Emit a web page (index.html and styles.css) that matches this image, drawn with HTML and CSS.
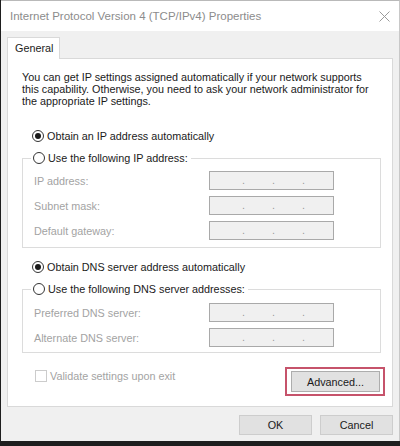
FILE: index.html
```html
<!DOCTYPE html>
<html lang="en">
<head>
    <meta charset="UTF-8">
    <meta name="viewport" content="width=device-width, initial-scale=1.0">
    <link rel="stylesheet" href="styles.css">
    <title>Internet Protocol Version 4 (TCP/IPv4) Properties</title>
</head>
<body>
    <div class="window">
        <div class="titlebar">
            <span class="title">Internet Protocol Version 4 (TCP/IPv4) Properties</span>
            <svg class="close" width="11" height="11" viewBox="0 0 11 11">
                <path d="M0.5 0.5 L10.5 10.5 M10.5 0.5 L0.5 10.5" stroke="#9a9a9a" stroke-width="1" fill="none"/>
            </svg>
        </div>

        <div class="dialog">
            <div class="tabs">
                <span class="tab">General</span>
            </div>

            <div class="panel">
                <p class="intro">You can get IP settings assigned automatically if your network supports this capability. Otherwise, you need to ask your network administrator for the appropriate IP settings.</p>

                <!-- IP address -->
                <div class="radio-row first">
                    <span class="radio checked"></span>
                    <span>Obtain an IP address automatically</span>
                </div>
                <fieldset class="group">
                    <legend class="radio-row">
                        <span class="radio"></span>
                        <span>Use the following IP address:</span>
                    </legend>
                    <div class="field-row">
                        <span class="label">IP address:</span>
                        <span class="ip-box"><i>.</i><i>.</i><i>.</i></span>
                    </div>
                    <div class="field-row">
                        <span class="label">Subnet mask:</span>
                        <span class="ip-box"><i>.</i><i>.</i><i>.</i></span>
                    </div>
                    <div class="field-row">
                        <span class="label">Default gateway:</span>
                        <span class="ip-box"><i>.</i><i>.</i><i>.</i></span>
                    </div>
                </fieldset>

                <!-- DNS -->
                <div class="radio-row second">
                    <span class="radio checked"></span>
                    <span>Obtain DNS server address automatically</span>
                </div>
                <fieldset class="group dns">
                    <legend class="radio-row">
                        <span class="radio"></span>
                        <span>Use the following DNS server addresses:</span>
                    </legend>
                    <div class="field-row">
                        <span class="label">Preferred DNS server:</span>
                        <span class="ip-box"><i>.</i><i>.</i><i>.</i></span>
                    </div>
                    <div class="field-row">
                        <span class="label">Alternate DNS server:</span>
                        <span class="ip-box"><i>.</i><i>.</i><i>.</i></span>
                    </div>
                </fieldset>

                <div class="bottom-row">
                    <div class="check-row">
                        <span class="checkbox"></span>
                        <span>Validate settings upon exit</span>
                    </div>
                    <span class="highlight">
                        <button class="btn advanced">Advanced...</button>
                    </span>
                </div>
            </div>

            <div class="footer">
                <button class="btn">OK</button>
                <button class="btn">Cancel</button>
            </div>
        </div>
    </div>
</body>
</html>
```

FILE: styles.css
```css
*, body{
    box-sizing: border-box;
    margin: 0;
}
body{
    width: 400px;
    height: 446px;
    background: #1e1e1e;
    font-family: 'Liberation Sans', Arial, sans-serif;
    font-size: 10.8px;
    color: #1a1a1a;
    overflow: hidden;
}

.window{
    margin-left: 1px;
    width: 399px;
    height: 441px;
    background: #f0f0f0;
    border-top: 1px solid #b9b9b9;
    border-right: 1px solid #c8c8c8;
    display: flex;
    flex-direction: column;
}

/* title bar */
.titlebar{
    height: 30px;
    background: #fff;
    display: flex;
    align-items: center;
    justify-content: space-between;
    padding: 0 9px;
}
.title{
    font-size: 11.5px;
    color: #8c8c8c;
}

/* body of the dialog */
.dialog{
    padding: 6px 6px 0 6px;
}
.tabs{
    display: flex;
    position: relative;
    z-index: 1;
}
.tab{
    height: 22px;
    margin-bottom: -1px;
    padding: 4px 6px 0 7px;
    background: #fff;
    border: 1px solid #d9d9d9;
    border-bottom: none;
    color: #222;
}
.panel{
    height: 349px;
    background: #fff;
    border: 1px solid #d9d9d9;
    padding: 12px 11px 0 14px;
}
.intro{
    line-height: 12px;
}

/* radios */
.radio-row{
    display: flex;
    align-items: center;
    gap: 3px;
    height: 16px;
    line-height: 16px;
}
.radio-row.first{
    margin: 21px 0 0 10px;
}
.radio-row.second{
    margin: 11px 0 0 10px;
}
.radio{
    width: 12px;
    height: 12px;
    border: 1px solid #333;
    border-radius: 50%;
    display: flex;
    align-items: center;
    justify-content: center;
}
.radio.checked::after{
    content: '';
    width: 6px;
    height: 6px;
    border-radius: 50%;
    background: #1a1a1a;
}

/* group boxes */
.group{
    margin-top: 6px;
    border: 1px solid #dcdcdc;
    padding: 5px 0 7px 7px;
    min-width: 0;
}
.group legend{
    padding: 0 3px 0 2px;
    margin-left: 1px;
}
.group.dns{
    padding-top: 6px;
    padding-bottom: 5px;
}
.field-row{
    display: grid;
    grid-template-columns: 175px 125px;
    align-items: center;
    padding-left: 4px;
    height: 19px;
    margin-bottom: 6px;
}
.field-row:last-child{
    margin-bottom: 0;
}
.label{
    color: #a3a3a3;
}
.ip-box{
    height: 19px;
    background: #f0f0f0;
    border: 1px solid #a9a9a9;
    display: flex;
    padding-left: 32px;
    gap: 27px;
    color: #9a9a9a;
    line-height: 17px;
}
.ip-box i{
    font-style: normal;
    width: 3px;
}

/* validate + advanced */
.bottom-row{
    display: flex;
    justify-content: space-between;
    align-items: flex-start;
    margin-top: 14px;
    margin-right: -4px;
}
.check-row{
    display: flex;
    align-items: center;
    gap: 3px;
    margin: 3px 0 0 13px;
    color: #a3a3a3;
    line-height: 12px;
}
.checkbox{
    width: 12px;
    height: 12px;
    border: 1px solid #cccccc;
}
.highlight{
    display: block;
    border: 2px solid #c6536b;
    padding: 2px 3px 2px 4px;
}

/* buttons */
.btn{
    font-family: inherit;
    font-size: 10.8px;
    color: #1a1a1a;
    background: #e1e1e1;
    border: 1px solid #cdcdcd;
    width: 73px;
    height: 20px;
    padding: 0;
}
.btn.advanced{
    display: block;
    width: 89px;
    height: 21px;
    border-color: #adadad;
}
.footer{
    display: flex;
    justify-content: flex-end;
    gap: 8px;
    padding-top: 8px;
}
```
